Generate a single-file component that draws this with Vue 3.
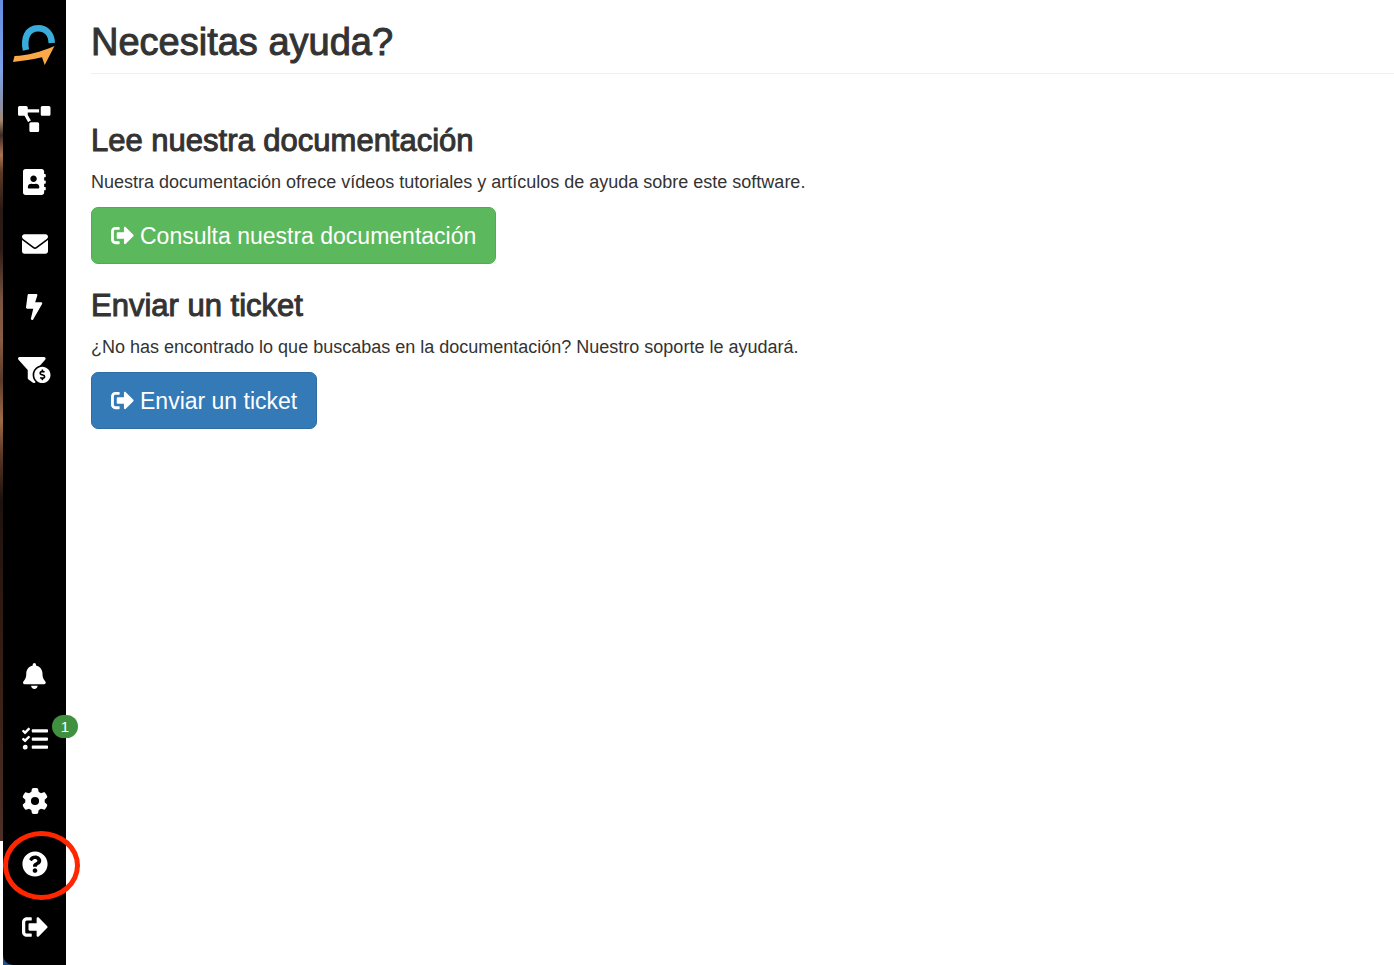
<script setup>
const exitPath =
  'M497 273L329 441c-15 15-41 4.500-41-17v-96H152c-13.300 0-24-10.700-24-24v-96c0-13.300 10.700-24 24-24h136V88c0-21.400 25.900-32 41-17l168 168c9.300 9.400 9.300 24.600 0 34zM192 436v-40c0-6.600-5.400-12-12-12H96c-17.700 0-32-14.300-32-32V160c0-17.700 14.300-32 32-32h84c6.600 0 12-5.400 12-12V76c0-6.600-5.400-12-12-12H96c-53 0-96 43-96 96v192c0 53 43 96 96 96h84c6.600 0 12-5.400 12-12z'

const mainItems = [
  {
    label: 'Embudos',
    box: '0 0 640 512',
    path: 'M384 320H256c-17.67 0-32 14.33-32 32v128c0 17.67 14.33 32 32 32h128c17.67 0 32-14.33 32-32V352c0-17.67-14.33-32-32-32zM192 32c0-17.67-14.33-32-32-32H32C14.33 0 0 14.33 0 32v128c0 17.67 14.33 32 32 32h95.72l73.16 128.04C211.98 300.98 232.4 288 256 288h.28L192 175.51V128h224V64H192V32zM608 0H480c-17.67 0-32 14.33-32 32v128c0 17.67 14.33 32 32 32h128c17.67 0 32-14.33 32-32V32c0-17.67-14.33-32-32-32z',
  },
  {
    label: 'Contactos',
    box: '0 0 448 512',
    path: 'M436 160c6.6 0 12-5.4 12-12v-40c0-6.6-5.4-12-12-12h-20V48c0-26.5-21.5-48-48-48H48C21.5 0 0 21.5 0 48v416c0 26.5 21.5 48 48 48h320c26.5 0 48-21.5 48-48v-48h20c6.6 0 12-5.4 12-12v-40c0-6.6-5.4-12-12-12h-20v-64h20c6.6 0 12-5.4 12-12v-40c0-6.6-5.4-12-12-12h-20v-64h20zm-228-32c35.3 0 64 28.7 64 64s-28.7 64-64 64-64-28.7-64-64 28.7-64 64-64zm112 236.8c0 10.6-10 19.2-22.4 19.2H118.4C106 384 96 375.4 96 364.8v-19.2c0-31.8 30.1-57.6 67.2-57.6h5c12.3 5.1 25.7 8 39.8 8s27.6-2.9 39.8-8h5c37.1 0 67.2 25.8 67.2 57.6v19.2z',
  },
  {
    label: 'Correo',
    box: '0 0 512 512',
    path: 'M48 64C21.5 64 0 85.5 0 112c0 15.1 7.1 29.3 19.2 38.4L236.8 313.6c11.4 8.5 27 8.5 38.4 0L492.8 150.4c12.1-9.1 19.2-23.3 19.2-38.4c0-26.5-21.5-48-48-48H48zM0 176V400c0 26.5 21.5 48 48 48H464c26.5 0 48-21.5 48-48V176L294.4 339.2c-22.8 17.1-54 17.1-76.8 0L0 176z',
  },
  {
    label: 'Automatización',
    box: '0 0 320 512',
    path: 'M296 160H180.6l42.6-129.8C227.2 15 215.7 0 200 0H56C44 0 33.8 8.9 32.2 20.8l-32 240C-1.7 275.2 9.5 288 24 288h118.7L96.6 482.5c-3.6 15.2 8 29.5 23.3 29.5 8.4 0 16.4-4.4 20.8-12l176-304c9.3-15.9-2.2-36-20.7-36z',
  },
  {
    label: 'Ventas',
    box: '0 0 640 512',
    path: 'M433.46 165.94l101.2-111.87C554.61 34.12 540.48 0 512.26 0H31.74C3.52 0-10.61 34.12 9.34 54.07L192 256v155.92c0 12.59 5.93 24.44 16 32l79.99 60c20.86 15.64 48.47 6.97 59.22-13.57C310.8 455.38 288 406.35 288 352c0-89.79 62.05-165.17 145.46-186.06zM480 192c-88.37 0-160 71.63-160 160s71.63 160 160 160 160-71.63 160-160-71.63-160-160-160zm16 239.88V448c0 4.42-3.58 8-8 8h-16c-4.42 0-8-3.58-8-8v-16.29c-11.29-.58-22.27-4.52-31.37-11.35-3.9-2.93-4.1-8.77-.57-12.14l11.75-11.21c2.77-2.64 6.89-2.76 10.13-.73 3.87 2.42 8.26 3.72 12.82 3.72h28.11c6.5 0 11.8-5.92 11.8-13.19 0-5.95-3.61-11.19-8.77-12.73l-45-13.5c-18.59-5.58-31.58-23.42-31.58-43.39 0-24.52 19.05-44.44 42.67-45.07V256c0-4.42 3.58-8 8-8h16c4.42 0 8 3.58 8 8v16.29c11.29.58 22.27 4.51 31.37 11.35 3.9 2.93 4.1 8.77.57 12.14l-11.75 11.21c-2.77 2.64-6.89 2.76-10.13.73-3.87-2.43-8.26-3.72-12.82-3.72h-28.11c-6.5 0-11.8 5.92-11.8 13.19 0 5.95 3.61 11.19 8.77 12.73l45 13.5c18.59 5.58 31.58 23.42 31.58 43.39 0 24.53-19.05 44.44-42.67 45.07z',
  },
]

const footItems = [
  {
    label: 'Notificaciones',
    box: '0 0 448 512',
    path: 'M224 0c-17.7 0-32 14.3-32 32V51.2C119 66 64 130.6 64 208v18.8c0 47-17.3 92.4-48.5 127.6l-7.4 8.3c-8.4 9.4-10.4 22.9-5.3 34.4S19.4 416 32 416H416c12.6 0 24-7.4 29.2-18.9s3.1-25-5.3-34.4l-7.4-8.3C401.3 319.2 384 273.9 384 226.8V208c0-77.4-55-142-128-156.8V32c0-17.7-14.3-32-32-32zm45.3 493.3c12-12 18.7-28.3 18.7-45.3H224 160c0 17 6.7 33.3 18.7 45.3s28.3 18.7 45.3 18.7s33.3-6.7 45.3-18.7z',
  },
  {
    label: 'Tareas',
    box: '0 0 512 512',
    badge: 1,
    path: 'M139.61 35.5a12 12 0 0 0-17 0L58.93 98.81l-22.7-22.12a12 12 0 0 0-17 0L3.53 92.41a12 12 0 0 0 0 17l47.59 47.4a12.78 12.78 0 0 0 17.61 0l15.59-15.62L156.52 69a12.09 12.09 0 0 0 .09-17zm0 159.19a12 12 0 0 0-17 0l-63.68 63.72-22.7-22.1a12 12 0 0 0-17 0L3.53 252a12 12 0 0 0 0 17L51 316.5a12.77 12.77 0 0 0 17.6 0l15.7-15.69 72.2-72.22a12 12 0 0 0 .09-16.9zM64 368c-26.49 0-48.59 21.5-48.59 48S37.53 464 64 464a48 48 0 0 0 0-96zm432 16H208a16 16 0 0 0-16 16v32a16 16 0 0 0 16 16h288a16 16 0 0 0 16-16v-32a16 16 0 0 0-16-16zm0-320H208a16 16 0 0 0-16 16v32a16 16 0 0 0 16 16h288a16 16 0 0 0 16-16V80a16 16 0 0 0-16-16zm0 160H208a16 16 0 0 0-16 16v32a16 16 0 0 0 16 16h288a16 16 0 0 0 16-16v-32a16 16 0 0 0-16-16z',
  },
  {
    label: 'Configuración',
    box: '0 0 512 512',
    path: 'M495.9 166.6c3.2 8.7 .5 18.4-6.4 24.6l-43.3 39.4c1.1 8.3 1.7 16.8 1.7 25.4s-.6 17.1-1.7 25.4l43.3 39.4c6.9 6.2 9.6 15.9 6.4 24.6c-4.4 11.9-9.7 23.3-15.8 34.3l-4.7 8.1c-6.6 11-14 21.4-22.1 31.2c-5.9 7.2-15.7 9.6-24.5 6.8l-55.7-17.7c-13.4 10.3-28.2 18.9-44 25.4l-12.5 57.1c-2 9.1-9 16.3-18.2 17.8c-13.8 2.3-28 3.5-42.5 3.5s-28.7-1.2-42.5-3.5c-9.2-1.5-16.2-8.7-18.2-17.8l-12.5-57.1c-15.8-6.5-30.6-15.1-44-25.4L83.1 425.9c-8.8 2.8-18.6 .3-24.5-6.8c-8.1-9.8-15.5-20.2-22.1-31.2l-4.7-8.1c-6.1-11-11.4-22.4-15.8-34.3c-3.2-8.7-.5-18.4 6.4-24.6l43.3-39.4C64.6 273.1 64 264.6 64 256s.6-17.1 1.7-25.4L22.4 191.2c-6.9-6.2-9.6-15.9-6.4-24.6c4.4-11.9 9.7-23.3 15.8-34.3l4.7-8.1c6.6-11 14-21.4 22.1-31.2c5.9-7.2 15.7-9.6 24.5-6.8l55.7 17.7c13.4-10.3 28.2-18.9 44-25.4l12.5-57.1c2-9.1 9-16.3 18.2-17.8C227.3 1.2 241.5 0 256 0s28.7 1.2 42.5 3.5c9.2 1.5 16.2 8.7 18.2 17.8l12.5 57.1c15.8 6.5 30.6 15.1 44 25.4l55.7-17.7c8.8-2.8 18.6-.3 24.5 6.8c8.1 9.8 15.5 20.2 22.1 31.2l4.7 8.1c6.1 11 11.4 22.4 15.8 34.3zM256 336a80 80 0 1 0 0-160 80 80 0 1 0 0 160z',
  },
  {
    label: 'Ayuda',
    box: '0 0 512 512',
    marked: true,
    path: 'M504 256c0 136.997-111.043 248-248 248S8 392.997 8 256C8 119.083 119.043 8 256 8s248 111.083 248 248zM262.655 90c-54.497 0-89.255 22.957-116.549 63.758-3.536 5.286-2.353 12.415 2.715 16.258l34.699 26.31c5.205 3.947 12.621 3.008 16.665-2.122 17.864-22.658 30.113-35.797 57.303-35.797 20.429 0 45.698 13.148 45.698 32.958 0 14.976-12.363 22.667-32.534 33.976C247.128 238.528 216 254.941 216 296v4c0 6.627 5.373 12 12 12h56c6.627 0 12-5.373 12-12v-1.333c0-28.462 83.186-29.647 83.186-106.667 0-58.002-60.165-102-116.531-102zM256 338c-25.365 0-46 20.635-46 46 0 25.364 20.635 46 46 46s46-20.636 46-46c0-25.364-20.635-46-46-46z',
  },
  { label: 'Salir', box: '0 0 512 512', path: exitPath },
]

const sections = [
  {
    title: 'Lee nuestra documentación',
    text: 'Nuestra documentación ofrece vídeos tutoriales y artículos de ayuda sobre este software.',
    action: 'Consulta nuestra documentación',
    kind: 'success',
  },
  {
    title: 'Enviar un ticket',
    text: '¿No has encontrado lo que buscabas en la documentación? Nuestro soporte le ayudará.',
    action: 'Enviar un ticket',
    kind: 'primary',
  },
]
</script>

<template>
  <div class="page">
    <div class="desktop"><div class="wallpaper"></div></div>
    <div class="dock">
      <aside class="sidebar">
        <a class="logo" href="#" aria-label="Inicio">
          <svg viewBox="0 0 44 42" aria-hidden="true">
            <path d="M13 26C10.500 15 14 4.300 25.300 4.300C33 4.300 38.300 10 38.800 19" fill="none" stroke="#39acdc" stroke-width="6.500" />
            <path d="M41.500 22L31.700 41L29 33.200C20 35.500 10 36.800 0 38L1.500 32C15 31.500 27 28 41.500 22z" fill="#fba948" />
          </svg>
        </a>
        <nav class="group" aria-label="Principal">
          <a v-for="item in mainItems" :key="item.label" class="item" href="#" :aria-label="item.label">
            <svg class="icon" :viewBox="item.box" aria-hidden="true"><path :d="item.path" /></svg>
          </a>
        </nav>
        <nav class="group foot" aria-label="Cuenta">
          <a v-for="item in footItems" :key="item.label" class="item" href="#" :aria-label="item.label">
            <svg class="icon" :viewBox="item.box" aria-hidden="true"><path fill-rule="evenodd" :d="item.path" /></svg>
            <span v-if="item.badge" class="badge">{{ item.badge }}</span>
            <span v-if="item.marked" class="ring"></span>
          </a>
        </nav>
      </aside>
    </div>
    <main class="content">
      <h1>Necesitas ayuda?</h1>
      <section v-for="s in sections" :key="s.title">
        <h2>{{ s.title }}</h2>
        <p>{{ s.text }}</p>
        <a class="btn" :class="s.kind" href="#">
          <svg viewBox="0 0 512 512" aria-hidden="true"><path :d="exitPath" /></svg>
          <span>{{ s.action }}</span>
        </a>
      </section>
    </main>
  </div>
</template>

<style>
body {
  margin: 0;
  background: #fff;
}
</style>

<style scoped>
.page {
  display: flex;
  min-height: 100vh;
  font-family: "Liberation Sans", Arial, sans-serif;
  color: #333;
}
.desktop {
  flex: none;
  width: 3px;
}
.wallpaper {
  height: 841px;
  background: linear-gradient(#6490e0 0, #7ba2e8 70px, #8a8fa8 105px, #a58a70 120px, #3c2a26 135px, #a87450 155px, #5c3b26 172px, #2a1a14 210px, #2e1d17 250px, #7a5340 300px, #8a5c42 340px, #5a3a2a 380px, #a06a48 420px, #5a3826 455px, #1d120d 500px, #2e1a12 600px, #3a2218 700px, #4e3028 841px);
}
.dock {
  flex: none;
  display: flex;
  width: 63px;
  background: #1d4f88;
}
.sidebar {
  flex: 1;
  display: flex;
  flex-direction: column;
  box-sizing: border-box;
  padding: 24px 0 7px;
  background: #000;
  border-bottom-left-radius: 10px;
}
.logo {
  display: flex;
  height: 64px;
  padding-left: 10px;
}
.logo svg {
  width: 44px;
  height: 42px;
}
.group {
  display: grid;
  grid-template-rows: repeat(5, 1fr);
  height: 313px;
}
.foot {
  margin-top: auto;
}
.item {
  position: relative;
  display: flex;
  align-items: center;
  justify-content: center;
}
.icon {
  height: 26px;
  fill: #fff;
}
.badge {
  position: absolute;
  left: 49px;
  top: 7px;
  width: 26px;
  height: 23px;
  border-radius: 12px;
  background: #3f903f;
  color: #fff;
  font-size: 15px;
  line-height: 23px;
  text-align: center;
}
.ring {
  position: absolute;
  left: 0;
  top: -2px;
  box-sizing: border-box;
  width: 77px;
  height: 69px;
  border: 5px solid #ff2600;
  border-radius: 50%;
}
.content {
  flex: 1;
  min-width: 0;
  padding: 20px 0 20px 25px;
}
h1,
h2 {
  margin: 0;
  font-weight: 400;
  -webkit-text-stroke: 1px #333;
}
h1 {
  margin-bottom: 50px;
  padding-bottom: 9px;
  border-bottom: 1px solid #eee;
  font-size: 38px;
  line-height: 44px;
}
h2 {
  font-size: 31px;
  line-height: 34px;
}
section {
  margin-bottom: 25px;
}
p {
  margin: 12px 0;
  font-size: 18px;
  line-height: 25px;
}
.btn {
  display: inline-flex;
  align-items: center;
  gap: 6px;
  box-sizing: border-box;
  height: 57px;
  padding: 0 19px;
  border: 1px solid;
  border-radius: 7px;
  color: #fff;
  font-size: 23px;
  line-height: 30px;
  text-decoration: none;
}
.btn svg {
  width: 23px;
  height: 23px;
  fill: #fff;
}
.success {
  background: #5cb85c;
  border-color: #4cae4c;
}
.primary {
  background: #337ab7;
  border-color: #2e6da4;
}
</style>
